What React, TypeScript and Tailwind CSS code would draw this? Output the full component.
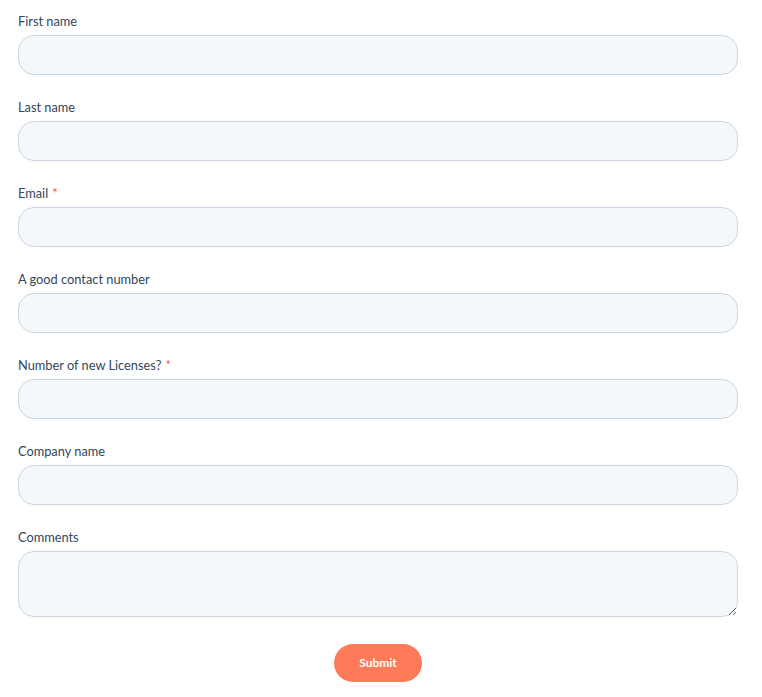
import React from 'react'

const fields = [
  { label: 'First name', required: false },
  { label: 'Last name', required: false },
  { label: 'Email', required: true },
  { label: 'A good contact number', required: false },
  { label: 'Number of new Licenses?', required: true },
  { label: 'Company name', required: false },
]

export default function App() {
  return (
    <div className="bg-white min-h-screen px-[18px] pt-[11px] font-['Lato','Noto_Sans',sans-serif] text-[#33475b]">
      <form className="w-[720px]" onSubmit={e => e.preventDefault()}>
        {fields.map(f => (
          <div key={f.label} className="mb-[22px]">
            <label className="block text-[12.8px] leading-[20px] mb-1">
              {f.label}
              {f.required && <span className="text-[#f2545b] ml-1">*</span>}
            </label>
            <input
              type="text"
              className="block w-full h-[40px] rounded-[16px] border border-[#cbd6e2] bg-[#f5f8fa] px-4 text-[14px] outline-none"
            />
          </div>
        ))}
        <div className="mb-[27px]">
          <label className="block text-[12.8px] leading-[20px] mb-1">Comments</label>
          <textarea className="block w-full h-[66px] rounded-[16px] border border-[#cbd6e2] bg-[#f5f8fa] px-4 py-2 text-[14px] outline-none" />
        </div>
        <div className="flex justify-center">
          <button
            type="submit"
            className="w-[88px] h-[38px] rounded-[19px] bg-[#ff7a59] text-white text-[12px] font-bold"
          >
            Submit
          </button>
        </div>
      </form>
    </div>
  )
}
